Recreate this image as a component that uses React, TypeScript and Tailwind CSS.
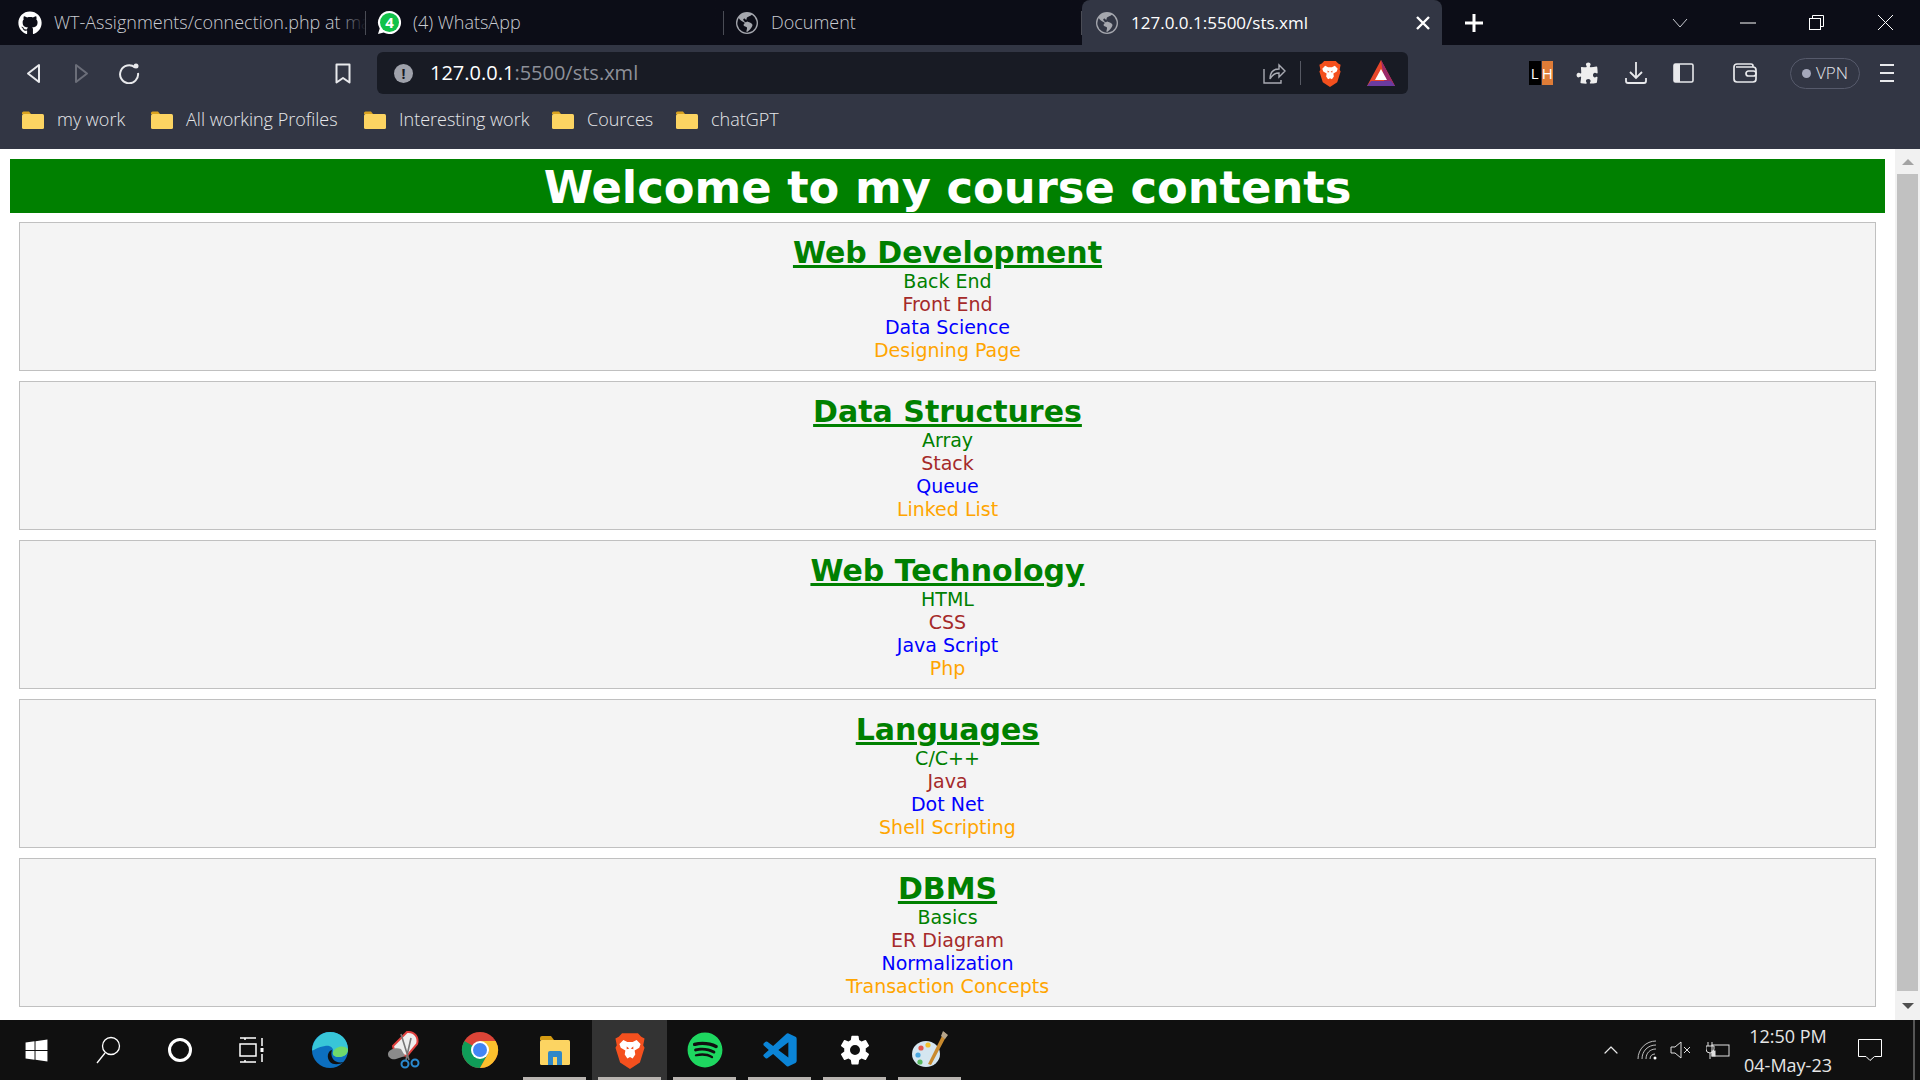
import { FaGithub, FaSpotify, FaWindows } from "react-icons/fa";
import { BiLogoVisualStudio } from "react-icons/bi";
import { IoSettingsSharp } from "react-icons/io5";
import { HiPuzzlePiece } from "react-icons/hi2";
import { BsGlobeAmericas } from "react-icons/bs";
import { ChevronUp } from "lucide-react";

const ui = "font-['Open_Sans',sans-serif]";

const sections = [
  { title: "Web Development", items: ["Back End", "Front End", "Data Science", "Designing Page"] },
  { title: "Data Structures", items: ["Array", "Stack", "Queue", "Linked List"] },
  { title: "Web Technology", items: ["HTML", "CSS", "Java Script", "Php"] },
  { title: "Languages", items: ["C/C++", "Java", "Dot Net", "Shell Scripting"] },
  { title: "DBMS", items: ["Basics", "ER Diagram", "Normalization", "Transaction Concepts"] },
];

const itemColors = ["text-[#008000]", "text-[#a52a2a]", "text-[#0000ff]", "text-[#ffa500]"];

const bookmarks = [
  { label: "my work", width: "w-[129px]" },
  { label: "All working Profiles", width: "w-[213px]" },
  { label: "Interesting work", width: "w-[188px]" },
  { label: "Cources", width: "w-[124px]" },
  { label: "chatGPT", width: "w-[124px]" },
];

const Folder = () => (
  <svg width="24" height="20" viewBox="0 0 24 20" className="shrink-0">
    <path d="M1 3a1.5 1.5 0 0 1 1.5-1.5H8L10 4H1z" fill="#d9a21f" />
    <rect x="1" y="4" width="22" height="15" rx="1.5" fill="#fcd462" />
  </svg>
);

const Tab = ({ title, children, width, pad }: { title: string; children: React.ReactNode; width: string; pad: string }) => (
  <div className={`${width} ${pad} h-[45px] flex items-center shrink-0 relative overflow-hidden`}>
    <div className="w-[24px] mr-[12px] flex justify-center shrink-0">{children}</div>
    <span className="text-[18px] font-light text-[#c9cbd1] whitespace-nowrap">{title}</span>
    <div className="absolute right-0 top-0 h-full w-[30px] bg-gradient-to-r from-transparent to-[#0c0d17]" />
    <div className="absolute right-0 top-[11px] h-[24px] w-px bg-[#4a4c55]" />
  </div>
);

const TaskItem = ({ children, bar, active }: { children: React.ReactNode; bar?: boolean; active?: boolean }) => (
  <div className={`w-[75px] h-[60px] flex items-center justify-center relative shrink-0 ${active ? "bg-[#333333]" : ""}`}>
    {children}
    {bar && <div className="absolute bottom-0 left-[6px] right-[6px] h-[3px] bg-[#b8b4b0]" />}
  </div>
);

const BraveIcon = ({ w, h }: { w: number; h: number }) => (
  <svg width={w} height={h} viewBox="0 0 24 28" className="shrink-0">
    <path d="M6 1h12l2.500 2.500L23 5l-1 5 1 2-3.500 11L12 28l-7.500-5L1 12l1-2-1-5 2.500-1.500z" fill="#f4501e" />
    <path d="M7 6l3 1.500h4L17 6l3 3-1 3-3.500 2 .5 3-2 3-2-1-2 1-2-3 .5-3L5 12 4 9z" fill="#fff" />
    <path d="M9.500 11l2 1.500-2 .5zM14.500 11l-2 1.500 2 .5zM10 20.500h4L12 23z" fill="#f4501e" />
  </svg>
);

const WhatsAppIcon = () => (
  <svg width="25" height="25" viewBox="0 0 25 25" className="shrink-0">
    <path d="M12.500 1a11.500 11.500 0 1 1-5.800 21.400L1 24l1.700-5.500A11.500 11.500 0 0 1 12.500 1z" fill="#fff" />
    <circle cx="12.500" cy="12.500" r="9.500" fill="#12c24a" />
    <text x="12.500" y="18" textAnchor="middle" fontSize="15" fontWeight="700" fill="#fff" fontFamily="'Open Sans',sans-serif">4</text>
  </svg>
);

const ChromeIcon = () => (
  <svg width="38" height="38" viewBox="0 0 38 38">
    <circle cx="19" cy="19" r="18" fill="#db4437" />
    <path d="M19 19 L3.400 10 A18 18 0 0 0 19 37 L28 21z" fill="#0f9d58" />
    <path d="M19 10 H34.600 A18 18 0 0 1 19 37 L28 21z" fill="#fbc02d" />
    <circle cx="19" cy="19" r="9" fill="#fff" />
    <circle cx="19" cy="19" r="7" fill="#4285f4" />
  </svg>
);

const EdgeIcon = () => (
  <svg width="38" height="38" viewBox="0 0 38 38">
    <circle cx="19" cy="19" r="18" fill="#0c6fc0" />
    <path d="M1 19C2 8 10 1 19 1c10 0 18 7 18 17 0 6-5 8-9 8-4 0-7-2-6-5 1-4-3-7-8-6-8 1-13 6-13 4z" fill="#38c6d8" />
    <path d="M37 18c0 6-5 8-9 8-4 0-7-2-6-5 2-5 10-8 15-3z" fill="#6fd96b" />
    <path d="M21 19c-4 1-6 7-2 12 3 3 9 3 14 0-5 1-9 0-11-3-2-3-2-6-1-9z" fill="#101010" />
  </svg>
);

const SnipIcon = () => (
  <svg width="36" height="40" viewBox="0 0 36 40" fill="none">
    <path d="M6 16 L20 2 C28 1 32 8 30 14 L20 26 L8 24z" fill="#eee" stroke="#e0413f" strokeWidth="2" />
    <path d="M1 24c0-4 7-7 13-5l4 7-9 3c-4 1-8-1-8-5z" fill="#8b8b8b" />
    <path d="M14 4 L22 30 M24 8 L19 30" stroke="#777" strokeWidth="1.600" />
    <circle cx="18" cy="34" r="3.500" stroke="#2a8ad0" strokeWidth="2" />
    <circle cx="28" cy="33" r="3.500" stroke="#2a8ad0" strokeWidth="2" />
  </svg>
);

const ExplorerIcon = () => (
  <svg width="32" height="32" viewBox="0 0 32 32">
    <path d="M1 4a2 2 0 0 1 2-2h9l3 4H1z" fill="#d49b12" />
    <rect x="1" y="6" width="30" height="25" rx="1.500" fill="#fcd462" />
    <path d="M9 31V19a2 2 0 0 1 2-2h10a2 2 0 0 1 2 2v12h-5v-8h-4v8z" fill="#2f88c8" />
  </svg>
);

const PaintIcon = () => (
  <svg width="38" height="40" viewBox="0 0 38 40">
    <ellipse cx="15" cy="24" rx="14" ry="13" fill="#d5e6f0" />
    <circle cx="10" cy="18" r="2.600" fill="#e4574c" />
    <circle cx="17" cy="15" r="2.600" fill="#f2c230" />
    <circle cx="7" cy="25" r="2.600" fill="#4aa7e0" />
    <circle cx="9" cy="32" r="2.600" fill="#59b860" />
    <path d="M33 2 L36 5 L20 35 L17 34z" fill="#c98a2e" />
    <path d="M32 1 L37 5 L34 9 L30 6z" fill="#b5a48a" />
  </svg>
);

const Card = ({ title, items }: { title: string; items: string[] }) => (
  <section className="h-[149px] border border-[#c0c0c0] bg-[#f4f4f4] text-center pt-[13px] mb-[10px] font-['DejaVu_Sans',sans-serif]">
    <h2 className="text-[30px] leading-[34px] font-bold text-[#008000] underline">{title}</h2>
    {items.map((item, i) => (
      <p key={item} className={`text-[19px] leading-[23px] ${itemColors[i]}`}>
        {item}
      </p>
    ))}
  </section>
);

export default function App() {
  return (
    <div className={`w-[1920px] h-[1080px] overflow-hidden flex flex-col bg-white ${ui}`}>
      {/* tab strip */}
      <div className="h-[45px] bg-[#0c0d17] flex items-center shrink-0">
        <Tab title="WT-Assignments/connection.php at main" width="w-[366px]" pad="pl-[18px]">
          <FaGithub className="text-white text-[24px] shrink-0" />
        </Tab>
        <Tab title="(4) WhatsApp" width="w-[358px]" pad="pl-[11px]">
          <WhatsAppIcon />
        </Tab>
        <Tab title="Document" width="w-[358px]" pad="pl-[11px]">
          <BsGlobeAmericas className="text-[#a5a7ae] text-[22px] shrink-0" />
        </Tab>
        <div className="w-[360px] h-[45px] bg-[#323644] rounded-t-[8px] flex items-center shrink-0 pl-[14px] pr-[12px]">
          <BsGlobeAmericas className="text-[#a5a7ae] text-[22px] shrink-0" />
          <span className="ml-[13px] text-[17px] text-white">127.0.0.1:5500/sts.xml</span>
          <svg width="14" height="14" viewBox="0 0 14 14" className="ml-auto" stroke="#fff" strokeWidth="2.400">
            <path d="M1 1l12 12M13 1L1 13" />
          </svg>
        </div>
        <svg width="20" height="20" viewBox="0 0 20 20" className="ml-[22px]" stroke="#fff" strokeWidth="3">
          <path d="M10 1v18M1 10h18" />
        </svg>
        <div className="flex-1" />
        <svg width="16" height="10" viewBox="0 0 16 10" fill="none" stroke="#c9cbd1" className="mr-[52px]">
          <path d="M1 1l7 8 7-8" />
        </svg>
        <svg width="16" height="2" viewBox="0 0 16 2" stroke="#fff" className="mr-[53px]">
          <path d="M0 1h16" />
        </svg>
        <svg width="15" height="15" viewBox="0 0 15 15" fill="none" stroke="#fff" className="mr-[54px]">
          <rect x="0.500" y="3.500" width="11" height="11" />
          <path d="M3.500 3.500V.5h11v11h-3" />
        </svg>
        <svg width="15" height="15" viewBox="0 0 15 15" stroke="#fff" className="mr-[27px]">
          <path d="M0 0l15 15M15 0L0 15" />
        </svg>
      </div>

      {/* toolbar */}
      <div className="h-[56px] bg-[#323644] flex items-center shrink-0">
        <svg width="15" height="21" viewBox="0 0 15 21" fill="none" stroke="#e8e9ec" strokeWidth="2" strokeLinejoin="round" className="ml-[26px]">
          <path d="M13 2v17L2 10.500z" />
        </svg>
        <svg width="15" height="21" viewBox="0 0 15 21" fill="none" stroke="#6b6e79" strokeWidth="2" strokeLinejoin="round" className="ml-[33px]">
          <path d="M2 2v17l11-8.500z" />
        </svg>
        <svg width="22" height="22" viewBox="0 0 22 22" fill="none" stroke="#e8e9ec" strokeWidth="2" className="ml-[29px]">
          <path d="M17 5.500A9 9 0 1 0 20 11" />
          <circle cx="18" cy="4" r="2.500" fill="#e8e9ec" stroke="none" />
        </svg>
        <svg width="16" height="21" viewBox="0 0 16 21" fill="none" stroke="#e8e9ec" strokeWidth="2" strokeLinejoin="round" className="ml-[195px]">
          <path d="M1.500 1.500h13v18L8 15l-6.500 4.500z" />
        </svg>
        <div className="ml-[26px] w-[1031px] h-[42px] bg-[#181b24] rounded-[6px] flex items-center">
          <div className="ml-[17px] w-[19px] h-[19px] rounded-full bg-[#9fa2ab] flex items-center justify-center text-[#181b24] text-[14px] font-bold">!</div>
          <span className="ml-[17px] text-[20px] text-white">
            127.0.0.1<span className="text-[#8d9099]">:5500/sts.xml</span>
          </span>
          <svg width="24" height="24" viewBox="0 0 24 24" fill="none" stroke="#a9abb3" strokeWidth="1.400" className="ml-auto">
            <path d="M2 8v14h17v-3M8 18c0-6 3-10 9-10V4l6 6-6 6v-4c-4 0-7 2-9 6z" />
          </svg>
          <div className="ml-[14px] w-px h-[24px] bg-[#565963]" />
          <div className="ml-[17px]"><BraveIcon w={24} h={27} /></div>
          <svg width="28" height="26" viewBox="0 0 28 26" className="ml-[25px] mr-[13px]">
            <path d="M14 0L0 26h28z" fill="#e8472a" />
            <path d="M14 0L28 26H18z" fill="#9b2a6a" />
            <path d="M0 26l4-5h20l4 5z" fill="#6a3ba0" />
            <path d="M14 9l6 11H8z" fill="#fff" />
          </svg>
        </div>
        <div className="ml-[121px] w-[24px] h-[24px] flex gap-px shrink-0 text-[15px] leading-[24px] text-center">
          <div className="flex-1 bg-black text-white">L</div>
          <div className="flex-1 bg-[#df7c37] text-white">H</div>
        </div>
        <HiPuzzlePiece className="ml-[22px] text-[#eeeeee] text-[25px] shrink-0" />
        <svg width="24" height="24" viewBox="0 0 24 24" fill="none" stroke="#e8e9ec" strokeWidth="1.800" className="ml-[24px] shrink-0">
          <path d="M12 1v15M6 11l6 6 6-6M2 17v3a2 2 0 0 0 2 2h16a2 2 0 0 0 2-2v-3" />
        </svg>
        <svg width="21" height="20" viewBox="0 0 21 20" className="ml-[25px] shrink-0">
          <rect x="1" y="1" width="19" height="18" rx="1.500" fill="none" stroke="#e8e9ec" strokeWidth="1.600" />
          <rect x="1" y="1" width="6" height="18" fill="#e8e9ec" />
        </svg>
        <svg width="24" height="20" viewBox="0 0 24 20" fill="none" stroke="#e8e9ec" strokeWidth="1.700" className="ml-[39px] shrink-0">
          <path d="M20 4V3a2 2 0 0 0-2-2H4a3 3 0 0 0-3 3v12a3 3 0 0 0 3 3h16a3 3 0 0 0 3-3V7a3 3 0 0 0-3-3H3" />
          <rect x="13" y="8" width="10" height="5" rx="2.500" />
        </svg>
        <div className="ml-[33px] w-[70px] h-[31px] rounded-full border border-[#565a6b] flex items-center justify-center shrink-0">
          <div className="w-[9px] h-[9px] rounded-full bg-[#a5a8bb]" />
          <span className="ml-[5px] text-[17px] font-light text-[#e4e5ea]">VPN</span>
        </div>
        <svg width="14" height="20" viewBox="0 0 14 20" stroke="#e8e9ec" strokeWidth="2" className="ml-[20px] shrink-0">
          <path d="M0 2h14M0 10h14M0 18h14" />
        </svg>
      </div>

      {/* bookmarks */}
      <div className="h-[48px] bg-[#323644] flex items-start pt-[5px] pl-[21px] shrink-0">
        {bookmarks.map((b) => (
          <div key={b.label} className={`${b.width} flex items-center shrink-0`}>
            <Folder />
            <span className="ml-[12px] text-[18px] font-light text-[#e6e7ea] whitespace-nowrap">{b.label}</span>
          </div>
        ))}
      </div>

      {/* page */}
      <div className="flex-1 min-h-0 flex bg-white overflow-hidden">
        <main className="w-[1895px] pt-[10px] pl-[10px] pr-[10px] overflow-hidden">
          <h1 className="h-[54px] bg-[#008000] text-white text-center font-['DejaVu_Sans',sans-serif] font-bold text-[44.8px] leading-[57px]">
            Welcome to my course contents
          </h1>
          <div className="pt-[9px] pl-[9px] pr-[9px]">
            {sections.map((s) => (
              <Card key={s.title} title={s.title} items={s.items} />
            ))}
          </div>
        </main>
        <div className="w-[25px] bg-[#f1f1f1] flex flex-col items-center">
          <div className="h-[25px] flex items-center justify-center shrink-0">
            <div className="w-0 h-0 border-x-[6px] border-x-transparent border-b-[6px] border-b-[#a3a3a3]" />
          </div>
          <div className="w-[21px] flex-1 bg-[#c1c1c1]" />
          <div className="h-[29px] flex items-center justify-center shrink-0">
            <div className="w-0 h-0 border-x-[6px] border-x-transparent border-t-[6px] border-t-[#505050]" />
          </div>
        </div>
      </div>

      {/* taskbar */}
      <div className="h-[60px] bg-[#101010] flex items-center shrink-0 relative">
        <div className="w-[72px] flex justify-center">
          <FaWindows className="text-white text-[25px]" />
        </div>
        <div className="w-[72px] flex justify-center">
          <svg width="26" height="28" viewBox="0 0 26 28" fill="none" stroke="#fff" strokeWidth="1.300">
            <circle cx="16" cy="10" r="8.500" />
            <path d="M10 17L2 27" />
          </svg>
        </div>
        <div className="w-[72px] flex justify-center">
          <div className="w-[24px] h-[24px] rounded-full border-[3px] border-white" />
        </div>
        <div className="w-[72px] flex justify-center">
          <svg width="26" height="26" viewBox="0 0 26 26" fill="none" stroke="#fff" strokeWidth="1.500">
            <path d="M1 1h16M1 25h16M1 7h16v12H1zM6 1v2M6 25v-2M23 1v8M23 17v8" />
            <rect x="21.500" y="11" width="3" height="4" fill="#fff" stroke="none" />
          </svg>
        </div>
        <div className="w-[4px]" />
        <TaskItem><EdgeIcon /></TaskItem>
        <TaskItem><SnipIcon /></TaskItem>
        <TaskItem><ChromeIcon /></TaskItem>
        <TaskItem bar><ExplorerIcon /></TaskItem>
        <TaskItem bar active><BraveIcon w={32} h={37} /></TaskItem>
        <TaskItem bar><FaSpotify className="text-[#1ed760] text-[36px]" /></TaskItem>
        <TaskItem bar><BiLogoVisualStudio className="text-[#0b84d6] text-[40px]" /></TaskItem>
        <TaskItem bar><IoSettingsSharp className="text-white text-[32px]" /></TaskItem>
        <TaskItem bar><PaintIcon /></TaskItem>
        <div className="flex-1" />
        <ChevronUp className="text-[#e8e8e8] mr-[14px]" size={24} strokeWidth={1.2} />
        <svg width="20" height="20" viewBox="0 0 20 20" fill="none" stroke="#bdbdbd" strokeWidth="1" className="mr-[13px]">
          <path d="M1 19C1 9 9 1 19 1M5 19C5 11 11 5 19 5M9 19c0-6 4-10 10-10M13 19c0-3 2-5 5-5" />
          <circle cx="18" cy="18" r="1.500" fill="#fff" stroke="none" />
        </svg>
        <svg width="22" height="18" viewBox="0 0 22 18" fill="none" stroke="#e0e0e0" strokeWidth="1" className="mr-[14px]">
          <path d="M1 6h4l6-5v16l-6-5H1zM14 6l6 6M20 6l-6 6" />
        </svg>
        <svg width="24" height="18" viewBox="0 0 24 18" fill="none" stroke="#e0e0e0" strokeWidth="1" className="mr-[13px]">
          <rect x="6" y="4" width="17" height="11" />
          <path d="M2 1v4M6 1v4M0 5h8v3a4 4 0 0 1-8 0zM4 12v6" />
          <rect x="6" y="10" width="3" height="5" fill="#e0e0e0" />
        </svg>
        <div className="w-[90px] pt-[1px] text-center text-[#e6e6e6] text-[18px] leading-[29px] whitespace-nowrap">
          <div>12:50 PM</div>
          <div>04-May-23</div>
        </div>
        <svg width="24" height="24" viewBox="0 0 24 24" fill="none" stroke="#fff" strokeWidth="1" className="ml-[25px] mr-[38px]">
          <path d="M.5 1.500h23v17h-7L12 22.500 8 18.500H.5z" />
        </svg>
        <div className="absolute right-[5px] top-0 w-[2px] h-full bg-[#555]" />
      </div>
    </div>
  );
}
